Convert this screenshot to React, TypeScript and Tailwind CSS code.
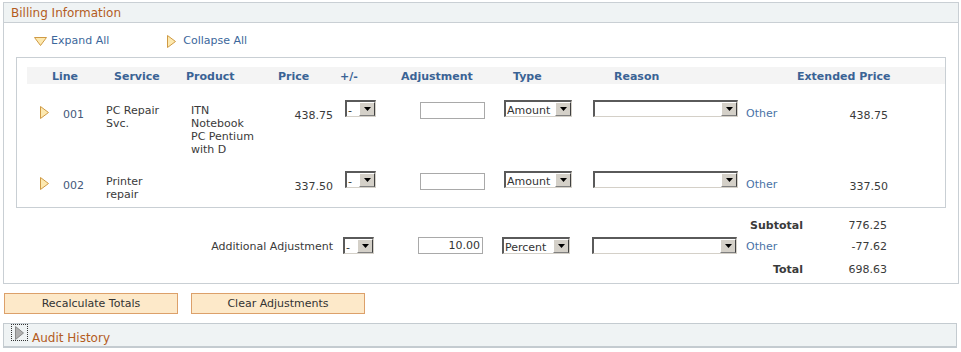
import React from "react";

function DownTri() {
  return (
    <svg width="13" height="9" viewBox="0 0 13 9">
      <polygon points="0.5,0.5 12.5,0.5 6.5,8.5" fill="#fde9b0" stroke="#cf9a45" strokeWidth="1" strokeLinejoin="round" />
    </svg>
  );
}

function RightTri() {
  return (
    <svg width="9" height="13" viewBox="0 0 9 13">
      <polygon points="0.5,0.5 8.5,6.5 0.5,12.5" fill="#fde9b0" stroke="#cf9a45" strokeWidth="1" strokeLinejoin="round" />
    </svg>
  );
}

function DropBtn() {
  return (
    <div className="flex h-full w-[16px] shrink-0 items-center justify-center border-t border-l border-t-white border-l-white border-r border-b border-r-[#404040] border-b-[#808080] bg-[#d4d0c8]">
      <svg width="7" height="4" viewBox="0 0 7 4">
        <polygon points="0,0 7,0 3.5,4" fill="#000" />
      </svg>
    </div>
  );
}

function Sel({ className, text }: { className: string; text?: string }) {
  return (
    <div
      className={
        "flex h-[17px] items-stretch border-t-2 border-l-2 border-t-[#5a5a5a] border-l-[#5a5a5a] border-r border-b border-r-[#d4d0c8] border-b-[#d4d0c8] bg-white " +
        className
      }
    >
      <div className="flex flex-1 items-center overflow-hidden whitespace-nowrap pl-[1px] pt-[2px] text-[11px] leading-[13px] text-[#333]">
        {text}
      </div>
      <DropBtn />
    </div>
  );
}

function Inp({ value }: { value?: string }) {
  return (
    <div className="h-[17px] w-[65px] border border-[#a9a9a9] bg-white pr-[2px] pt-[1px] text-right text-[11px] leading-[14px] text-[#333]">
      {value}
    </div>
  );
}

const cols = "grid grid-cols-[23px_56px_80px_80px_74px_60px_100px_90px_152px_48px_140px]";
const tcols = "grid grid-cols-[23px_56px_80px_80px_74px_60px_100px_90px_152px_70px_118px]";

function Row({
  line,
  service,
  product,
  price,
  ext,
  pt,
}: {
  line: string;
  service: string[];
  product: string[];
  price: string;
  ext: string;
  pt: string;
}) {
  return (
    <div className={cols + " items-start " + pt}>
      <div className="mt-[6px] pl-[13px] flex">
        <RightTri />
      </div>
      <div className="mt-[8px] pl-[13px] leading-[13px] text-[#44597a]">{line}</div>
      <div className="mt-[4px] leading-[13px] text-[#3a3a3a]">
        {service.map((s) => (
          <div key={s}>{s}</div>
        ))}
      </div>
      <div className="mt-[4px] pl-[5px] leading-[13px] text-[#3a3a3a]">
        {product.map((s) => (
          <div key={s}>{s}</div>
        ))}
      </div>
      <div className="mt-[9px] pr-[7px] text-right leading-[13px] text-[#3a3a3a]">{price}</div>
      <div className="pl-[5px]">
        <Sel className="w-[31px]" text="-" />
      </div>
      <div className="mt-[2px] pl-[20px]">
        <Inp />
      </div>
      <div className="pl-[4px]">
        <Sel className="w-[68px]" text="Amount" />
      </div>
      <div className="pl-[3px]">
        <Sel className="w-[145px]" />
      </div>
      <div className="mt-[7px] pl-[4px] leading-[13px] text-[#4a72a6]">Other</div>
      <div className="mt-[9px] pr-[42px] text-right leading-[13px] text-[#3a3a3a]">{ext}</div>
    </div>
  );
}

export default function App() {
  return (
    <div className="h-[352px] w-[961px] bg-white pt-[2px] pl-[3px] font-['DejaVu_Sans',Verdana,sans-serif] text-[11px] text-[#333]">
      {/* Billing panel */}
      <div className="flex h-[282px] w-[956px] flex-col border border-[#c9cfd4]">
        <div className="flex h-[20px] items-center border-b border-[#c9cfd4] bg-[#eff3f4] pl-[7px] text-[12px] text-[#b35c1e]">
          Billing Information
        </div>
        <div className="flex h-[34px] items-center pt-[2px] text-[#3c679b]">
          <div className="ml-[30px] flex items-center">
            <DownTri />
            <span className="ml-[4px]">Expand All</span>
          </div>
          <div className="ml-[58px] flex items-center">
            <RightTri />
            <span className="ml-[7px]">Collapse All</span>
          </div>
        </div>
        {/* inner grid box */}
        <div className="ml-[12px] h-[151px] w-[930px] border border-[#c9cfd4] pt-[9px] pl-[10px]">
          <div className={cols + " h-[17px] items-center bg-[#f4f4f4] pt-[2px] font-bold text-[#3a6395]"}>
            <div />
            <div className="pl-[2px]">Line</div>
            <div className="pl-[8px]">Service</div>
            <div>Product</div>
            <div className="pl-[12px]">Price</div>
            <div>+/-</div>
            <div className="pl-[1px]">Adjustment</div>
            <div className="pl-[13px]">Type</div>
            <div className="pl-[24px]">Reason</div>
            <div />
            <div className="pl-[7px] whitespace-nowrap">Extended Price</div>
          </div>
          <Row
            line="001"
            service={["PC Repair", "Svc."]}
            product={["ITN", "Notebook", "PC Pentium", "with D"]}
            price="438.75"
            ext="438.75"
            pt="pt-[16px]"
          />
          <Row line="002" service={["Printer", "repair"]} product={[]} price="337.50" ext="337.50" pt="pt-[15px]" />
        </div>
        {/* totals */}
        <div className="ml-[21px] mt-[8px] flex flex-col">
          <div className={tcols + " h-[16px] items-center pt-[2px]"}>
            <div className="col-start-9 col-span-2 pr-[7px] text-right font-bold text-[#3a3a3a]">Subtotal</div>
            <div className="pr-[41px] text-right text-[#3a3a3a]">776.25</div>
          </div>
          <div className={tcols + " mt-[4px] h-[17px] items-center"}>
            <div className="col-span-5 pr-[5px] pt-[3px] text-right text-[#3a3a3a]">Additional Adjustment</div>
            <div className="pl-[5px]">
              <Sel className="w-[31px]" text="-" />
            </div>
            <div className="pl-[20px]">
              <Inp value="10.00" />
            </div>
            <div className="pl-[4px]">
              <Sel className="w-[68px]" text="Percent" />
            </div>
            <div className="pl-[4px]">
              <Sel className="w-[145px]" />
            </div>
            <div className="pl-[6px] pt-[2px] text-[#4a72a6]">Other</div>
            <div className="pr-[41px] pt-[3px] text-right text-[#3a3a3a]">-77.62</div>
          </div>
          <div className={tcols + " mt-[7px] h-[16px] items-center pt-[2px]"}>
            <div className="col-start-9 col-span-2 pr-[7px] text-right font-bold text-[#3a3a3a]">Total</div>
            <div className="pr-[41px] text-right text-[#3a3a3a]">698.63</div>
          </div>
        </div>
      </div>
      {/* buttons */}
      <div className="ml-[1px] mt-[9px] flex gap-[13px]">
        <button className="h-[21px] w-[174px] border border-[#dca06a] bg-[#fde9c9] pt-[2px] text-[11px] text-[#333]">
          Recalculate Totals
        </button>
        <button className="h-[21px] w-[174px] border border-[#dca06a] bg-[#fde9c9] pt-[2px] text-[11px] text-[#333]">
          Clear Adjustments
        </button>
      </div>
      {/* audit history */}
      <div className="mt-[9px] flex h-[25px] w-[954px] items-start border border-b-2 border-[#c4cbd0] bg-[#eff3f4]">
        <div className="ml-[7px] flex h-[17px] w-[17px] items-center justify-center border border-dotted border-[#333]">
          <svg width="9" height="14" viewBox="0 0 9 14">
            <polygon points="0.5,0.5 8.5,7 0.5,13.5" fill="#b0b0b0" stroke="#8a8a8a" strokeWidth="1" />
          </svg>
        </div>
        <span className="ml-[4px] mt-[7px] text-[12px] leading-[15px] text-[#b35c1e]">Audit History</span>
      </div>
    </div>
  );
}
